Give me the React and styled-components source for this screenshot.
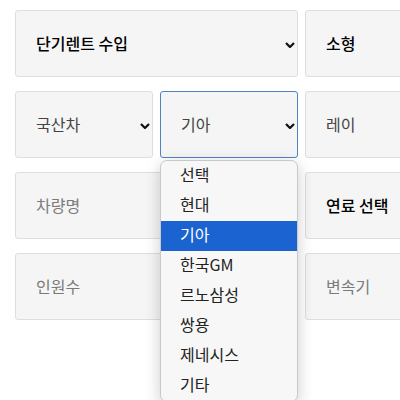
import React from "react";
import styled, { createGlobalStyle } from "styled-components";

const Global = createGlobalStyle`
  html, body { margin: 0; padding: 0; background: #fff; overflow: hidden; }
  body { font-family: "Noto Sans CJK KR", "Noto Sans", sans-serif; }
`;

const Page = styled.div`
  width: 400px;
  height: 400px;
  overflow: hidden;
  padding: 10px 0 0 15px;
  box-sizing: border-box;
`;

const Grid = styled.div`
  display: grid;
  grid-template-columns: 138px 138px 138px;
  grid-auto-rows: 67px;
  column-gap: 7px;
  row-gap: 14px;
`;

const Cell = styled.div`
  position: relative;
  grid-column: span ${(p) => p.$span || 1};
  display: flex;
  align-items: center;
  box-sizing: border-box;
  padding: 0 20px 2px;
  background: #f5f5f5;
  border: 1px solid ${(p) => (p.$focus ? "#4f84c4" : "#dedede")};
  border-radius: 3px;
  font-size: 16px;
  color: ${(p) => (p.$tone === "strong" ? "#000" : p.$tone === "ph" ? "#7a7a7a" : "#444")};
  font-weight: ${(p) => (p.$tone === "strong" ? 500 : 400)};
`;

const Label = styled.span`
  flex: 1;
  white-space: nowrap;
`;

const Chevron = styled.svg`
  position: absolute;
  right: 2px;
  top: 50%;
  margin-top: -2px;
  width: 10px;
  height: 6px;
`;

const Menu = styled.ul`
  position: absolute;
  left: -1px;
  top: 68px;
  width: 138px;
  margin: 0;
  padding: 0;
  list-style: none;
  box-sizing: border-box;
  background: #f7f7f7;
  border: 1px solid #c9c9c9;
  border-radius: 7px;
  overflow: hidden;
  box-shadow: 0 4px 16px rgba(0, 0, 0, 0.2);
  z-index: 10;
`;

const Option = styled.li`
  height: 30px;
  box-sizing: border-box;
  line-height: 27px;
  padding: 0 0 3px 19px;
  font-size: 16px;
  font-weight: 400;
  color: ${(p) => (p.$active ? "#fff" : "#222")};
  background: ${(p) => (p.$active ? "#1a63d1" : "transparent")};
`;

const Arrow = () => (
  <Chevron viewBox="0 0 10 6">
    <polyline points="1,1 5,5 9,1" fill="none" stroke="#111" strokeWidth="2.2" />
  </Chevron>
);

const makers = ["선택", "현대", "기아", "한국GM", "르노삼성", "쌍용", "제네시스", "기타"];

export default function App() {
  return (
    <Page>
      <Global />
      <Grid>
        <Cell $span={2} $tone="strong">
          <Label>단기렌트 수입</Label>
          <Arrow />
        </Cell>
        <Cell $tone="strong">
          <Label>소형</Label>
        </Cell>

        <Cell>
          <Label>국산차</Label>
          <Arrow />
        </Cell>
        <Cell $focus>
          <Label>기아</Label>
          <Arrow />
          <Menu>
            {makers.map((m) => (
              <Option key={m} $active={m === "기아"}>
                {m}
              </Option>
            ))}
          </Menu>
        </Cell>
        <Cell>
          <Label>레이</Label>
        </Cell>

        <Cell $span={2} $tone="ph">
          <Label>차량명</Label>
        </Cell>
        <Cell $tone="strong">
          <Label>연료 선택</Label>
        </Cell>

        <Cell $span={2} $tone="ph">
          <Label>인원수</Label>
        </Cell>
        <Cell $tone="ph">
          <Label>변속기</Label>
        </Cell>
      </Grid>
    </Page>
  );
}
